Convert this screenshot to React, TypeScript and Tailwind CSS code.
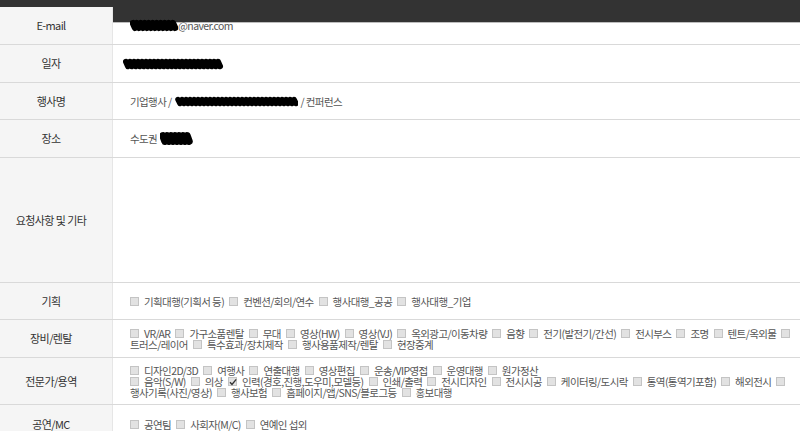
import React from "react";

const FONT = { fontFamily: '"Noto Sans CJK KR", "Liberation Sans", sans-serif' };

function Box({ checked }: { checked?: boolean }) {
  return (
    <span className="relative inline-block w-[9px] h-[9px] shrink-0 border border-[#c4c4c4] bg-[#e2e2e2]">
      {checked && (
        <svg viewBox="0 0 10 10" className="absolute -left-[1px] -top-[1px] w-[10px] h-[10px]">
          <path d="M2 5.2 L4 7.4 L8.2 2.4" fill="none" stroke="#333" strokeWidth="1.4" />
        </svg>
      )}
    </span>
  );
}

// 낙서로 가려진 개인정보
function Scribble({ w, h = 12 }: { w: number; h?: number }) {
  const pts: string[] = [];
  for (let x = 3; x < w - 3; x += 4) {
    pts.push(`${x},${h * 0.32} ${x + 2},${h * 0.68}`);
  }
  return (
    <svg width={w} height={h} className="shrink-0">
      <polyline
        points={pts.join(" ")}
        fill="none"
        stroke="#000"
        strokeWidth={h * 0.5}
        strokeLinecap="round"
        strokeLinejoin="round"
      />
    </svg>
  );
}

function Lines({ lines }: { lines: string[][] }) {
  return (
    <div className="flex flex-col">
      {lines.map((line, i) => (
        <div key={i} className="flex items-center gap-[5px] h-[11px] whitespace-nowrap">
          {line.map((s, j) =>
            s === "[]" ? <Box key={j} /> : s === "[v]" ? <Box key={j} checked /> : <span key={j}>{s}</span>
          )}
        </div>
      ))}
    </div>
  );
}

function Row({ label, h, children }: { label: string; h: string; children?: React.ReactNode }) {
  return (
    <div className={`flex border-b border-[#d9d9d9] ${h}`}>
      <div className="w-[113px] shrink-0 bg-[#f5f5f5] border-r border-[#e6e6e6] flex items-center justify-center pr-[10px] text-[11px] text-[#333]">
        {label}
      </div>
      <div className="flex-1 flex items-center pl-[17px] pr-[10px] text-[#555]">{children}</div>
    </div>
  );
}

export default function App() {
  return (
    <div className="w-[800px] h-[431px] overflow-hidden bg-white text-[10.5px] leading-[11px] tracking-[-0.6px]" style={FONT}>
      <div className="h-[23px] bg-[#333333] border-b border-[#bdbdbd]" />
      <div className="-mt-[16px]">
        <Row label="E-mail" h="h-[38px]">
          <div className="flex items-center">
            <Scribble w={48} h={13} />
            <span>@naver.com</span>
          </div>
        </Row>
        <Row label="일자" h="h-[38px]">
          <div className="-ml-[7px]">
            <Scribble w={102} h={12} />
          </div>
        </Row>
        <Row label="행사명" h="h-[37px]">
          <div className="flex items-center gap-[3px]">
            <span>기업행사 /</span>
            <Scribble w={123} h={11} />
            <span>/ 컨퍼런스</span>
          </div>
        </Row>
        <Row label="장소" h="h-[38px]">
          <div className="flex items-center gap-[3px]">
            <span>수도권</span>
            <Scribble w={34} h={15} />
          </div>
        </Row>
        <Row label="요청사항 및 기타" h="h-[125px]" />
        <Row label="기획" h="h-[37px]">
          <Lines lines={[["[]", "기획대행(기획서 등)", "[]", "컨벤션/회의/연수", "[]", "행사대행_공공", "[]", "행사대행_기업"]]} />
        </Row>
        <Row label="장비/렌탈" h="h-[38px]">
          <Lines
            lines={[
              [
                "[]", "VR/AR", "[]", "가구소품렌탈", "[]", "무대", "[]", "영상(HW)", "[]", "영상(VJ)",
                "[]", "옥외광고/이동차량", "[]", "음향", "[]", "전기(발전기/간선)", "[]", "전시부스",
                "[]", "조명", "[]", "텐트/옥외물", "[]",
              ],
              ["트러스/레이어", "[]", "특수효과/장치제작", "[]", "행사용품제작/렌탈", "[]", "현장중계"],
            ]}
          />
        </Row>
        <Row label="전문가/용역" h="h-[47px]">
          <Lines
            lines={[
              [
                "[]", "디자인2D/3D", "[]", "여행사", "[]", "연출대행", "[]", "영상편집", "[]", "운송/VIP영접",
                "[]", "운영대행", "[]", "원가정산",
              ],
              [
                "[]", "음악(S/W)", "[]", "의상", "[v]", "인력(경호,진행,도우미,모델등)", "[]", "인쇄/출력",
                "[]", "전시디자인", "[]", "전시시공", "[]", "케이터링/도시락", "[]", "통역(통역기포함)",
                "[]", "해외전시", "[]",
              ],
              ["행사기록(사진/영상)", "[]", "행사보험", "[]", "홈페이지/앱/SNS/블로그등", "[]", "홍보대행"],
            ]}
          />
        </Row>
        <Row label="공연/MC" h="h-[40px]">
          <Lines lines={[["[]", "공연팀", "[]", "사회자(M/C)", "[]", "연예인 섭외"]]} />
        </Row>
      </div>
    </div>
  );
}
